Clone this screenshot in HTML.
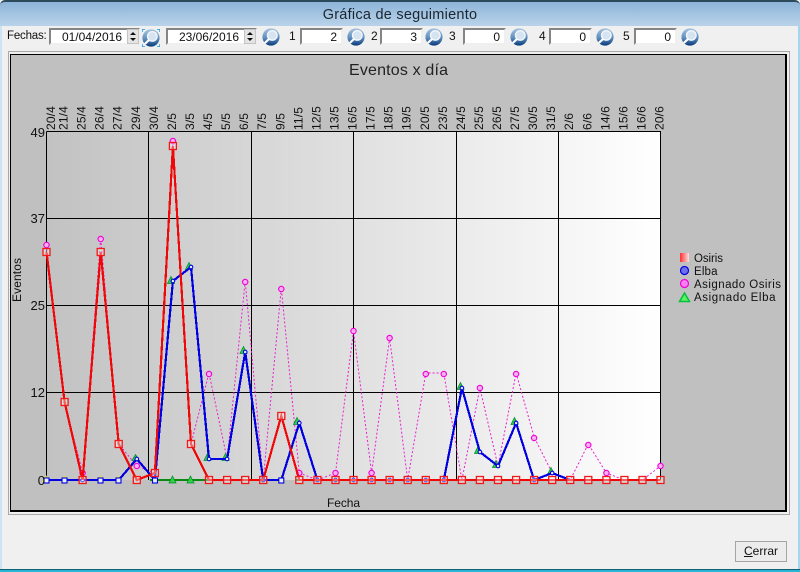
<!DOCTYPE html>
<html><head><meta charset="utf-8"><style>
html,body{margin:0;padding:0;background:#f0f0f0}
#w{position:relative;width:800px;height:572px;overflow:hidden;background:#f0f0f0;font:12px "Liberation Sans",sans-serif;color:#111}
#w div{position:absolute;box-sizing:border-box}
#tb{left:0;top:0;width:800px;height:26px;background:linear-gradient(#8db4d8,#b9d3ea);border-top:2px solid #2c4a5c;border-radius:5px 5px 0 0;text-align:center;font-size:14.5px;line-height:26px;color:#1c2630;letter-spacing:.25px}
.l{left:0;top:26px;width:2px;height:546px;background:#cde4f4}
.r{left:798px;top:26px;width:2px;height:546px;background:#9fd8ee}
.b{left:0;top:569px;width:800px;height:3px;background:#27b7d6;border-top:1px solid #0f5f74}
.t{line-height:16px;white-space:nowrap;top:28px}
.i{height:17px;top:28px;background:#fff;border:2px solid;border-color:#858585 #efefef #efefef #858585;text-align:right;line-height:14px;padding-right:4px;white-space:nowrap}
.s{width:12px;height:15px;top:29px;background:#e4e4e4;border:1px solid #c4c4c4}
.s:before,.s:after{content:"";position:absolute;left:2px;border-left:3px solid transparent;border-right:3px solid transparent}
.s:before{top:2px;border-bottom:3px solid #111}
.s:after{top:8px;border-top:3px solid #111}
svg.m{position:absolute;top:28px;width:18px;height:18px}
#pn{left:8px;top:51px;width:782px;height:464px;border:1px solid #a9a9a9}
#pi{left:10px;top:54px;width:777px;height:458px;background:#c0c0c0;border:1px solid #000;border-right-width:2px;border-bottom-width:2px}
#bt{left:735px;top:541px;width:52px;height:21px;background:#ececec;border:1px solid #a5a5a5;text-align:center;line-height:19px}
</style></head><body><div id="w">
<div id="tb">Gráfica de seguimiento</div>
<div class="l"></div><div class="r"></div>

<svg width="0" height="0" style="position:absolute"><defs>
<linearGradient id="g" x1="0" y1="0" x2="0" y2="1"><stop offset="0" stop-color="#a8c4de"/><stop offset=".55" stop-color="#5f8fbf"/><stop offset="1" stop-color="#08397a"/></linearGradient>
<symbol id="mg" viewBox="0 0 18 18"><circle cx="9" cy="9" r="8.6" fill="url(#g)"/><circle cx="10.3" cy="7.4" r="4.8" fill="#d6e4f1" stroke="#f5f8fb" stroke-width="1.3"/><path d="M7 11L2.8 15" stroke="#fff" stroke-width="2.2"/></symbol>
</defs></svg>

<div class="t" style="left:7px;font-size:11.5px;letter-spacing:-.2px">Fechas:</div>
<div class="i" style="left:49px;width:91px;padding-right:16px">01/04/2016</div><div class="s" style="left:127px"></div>
<svg class="m" style="left:142px;top:29px"><use href="#mg"/><path d="M0 3V0H3M15 0H18V3M0 15V18H3M15 18H18V15" fill="none" stroke="#1a9be0" stroke-width="1.4"/></svg>
<div class="i" style="left:166px;width:91px;padding-right:16px">23/06/2016</div><div class="s" style="left:244px"></div>
<svg class="m" style="left:262px"><use href="#mg"/></svg>
<div class="t" style="left:289px">1</div><div class="i" style="left:300px;width:43px">2</div><svg class="m" style="left:347px"><use href="#mg"/></svg>
<div class="t" style="left:371px">2</div><div class="i" style="left:380px;width:43px">3</div><svg class="m" style="left:425px"><use href="#mg"/></svg>
<div class="t" style="left:449px">3</div><div class="i" style="left:463px;width:43px">0</div><svg class="m" style="left:510px"><use href="#mg"/></svg>
<div class="t" style="left:539px">4</div><div class="i" style="left:549px;width:43px">0</div><svg class="m" style="left:596px"><use href="#mg"/></svg>
<div class="t" style="left:623px">5</div><div class="i" style="left:634px;width:43px">0</div><svg class="m" style="left:681px"><use href="#mg"/></svg>

<div id="pn"></div><div id="pi"></div>

<svg style="position:absolute;left:0;top:0" width="800" height="572" font-family="'Liberation Sans',sans-serif" fill="#111">
<defs>
<linearGradient id="pg"><stop offset="0" stop-color="#c2c2c2"/><stop offset="1" stop-color="#fff"/></linearGradient>
<linearGradient id="lg"><stop offset="0" stop-color="#ff3030"/><stop offset="1" stop-color="#ffe0e0"/></linearGradient>
<marker id="mr" markerUnits="userSpaceOnUse" markerWidth="10" markerHeight="10" refX="5" refY="5" overflow="visible"><rect x="1.5" y="1.5" width="7" height="7" fill="#fff" fill-opacity=".35" stroke="#f01818" stroke-width="1.3"/></marker>
<marker id="mb" markerUnits="userSpaceOnUse" markerWidth="8" markerHeight="8" refX="4" refY="4" overflow="visible"><circle cx="4" cy="4" r="1.8" fill="#dfe6ff" stroke="#0000e0" stroke-width="1.1"/></marker>
<marker id="mp" markerUnits="userSpaceOnUse" markerWidth="8" markerHeight="8" refX="4" refY="4" overflow="visible"><circle cx="4" cy="4" r="2.7" fill="#f8b0f0" stroke="#f000d8" stroke-width="1.1"/></marker>
</defs>

<rect x="46.5" y="131.5" width="614" height="348.5" fill="url(#pg)"/>
<g stroke="#000" stroke-width="1" shape-rendering="crispEdges">
<path d="M46.5 131.5H660.5V480M46.5 131.5V480M46.5 218.5H660.5M46.5 305.5H660.5M46.5 392.5H660.5M148.5 131.5V480M251.5 131.5V480M353.5 131.5V480M456.5 131.5V480M558.5 131.5V480" fill="none"/>
</g>

<polyline fill="none" stroke="#e820d0" stroke-width="1" stroke-dasharray="2 2" marker-start="url(#mp)" marker-end="url(#mp)" points="46.5,245 64.6,402 82.6,473 100.7,238 118.7,444 136.8,466 154.9,473 172.9,139 191,444 209,373 227.1,459 245.2,281 263.2,480 281.3,288 299.3,473 317.4,480 335.5,473 353.5,331 371.6,473 389.6,338 407.7,480 425.8,373 443.8,373 461.9,480 479.9,388 498,466 516.1,373 534.1,437 552.2,473 570.2,480 588.3,444 606.4,473 624.4,480 642.5,480 660.5,466"/>
<g fill="#f8b0f0" stroke="#f000d8" stroke-width="1.1"><circle cx="82.6" cy="473" r="2.7"/><circle cx="100.7" cy="239" r="2.7"/><circle cx="136.8" cy="466" r="2.7"/><circle cx="172.9" cy="141" r="2.7"/><circle cx="209" cy="374" r="2.7"/><circle cx="245.2" cy="282" r="2.7"/><circle cx="281.3" cy="289" r="2.7"/><circle cx="299.3" cy="473" r="2.7"/><circle cx="335.5" cy="473" r="2.7"/><circle cx="353.5" cy="331" r="2.7"/><circle cx="371.6" cy="473" r="2.7"/><circle cx="389.6" cy="338" r="2.7"/><circle cx="425.8" cy="374" r="2.7"/><circle cx="443.8" cy="374" r="2.7"/><circle cx="479.9" cy="388" r="2.7"/><circle cx="516.1" cy="374" r="2.7"/><circle cx="534.1" cy="438" r="2.7"/><circle cx="588.3" cy="445" r="2.7"/><circle cx="606.4" cy="473" r="2.7"/></g>

<path d="M150 480H210" stroke="#0a8a10" stroke-width="2" shape-rendering="crispEdges"/>
<path d="M296 480H317" stroke="#0a8a10" stroke-width="2" shape-rendering="crispEdges"/>
<g fill="#30d040" stroke="#009030" stroke-width=".8">
<path d="M172.5 476L176 483H169Z"/><path d="M190.5 476L194 483H187Z"/>
<g transform="translate(-1,-1.5)"><path d="M136.5 456L140 462H133Z"/><path d="M172 278L175.5 285H168.5Z"/><path d="M190 264L193.5 271H186.5Z"/><path d="M208.5 455L212 462H205Z"/><path d="M226.5 455L230 462H223Z"/><path d="M244.5 348L248 355H241Z"/><path d="M298 419L301.5 426H294.5Z"/><path d="M461.5 384L465 391H458Z"/><path d="M479 448L482.5 455H475.5Z"/><path d="M497 462L500.5 469H493.5Z"/><path d="M515.5 419L519 426H512Z"/><path d="M552 469L555.5 476H548.5Z"/></g>
</g>
<g fill="#e8e820"><path d="M46 475L50 482H42Z"/><path d="M64.5 475L68 482H61Z"/><path d="M100.5 475L104 482H97Z"/><path d="M118.5 475L122 482H115Z"/><path d="M281 475L285 482H277Z"/></g>

<polyline fill="none" stroke="#0000e0" stroke-width="2.2" shape-rendering="crispEdges" marker-start="url(#mb)" marker-mid="url(#mb)" points="46.5,480 64.6,480 82.6,480 100.7,480 118.7,480 136.8,459 154.9,480 172.9,281 191,267 209,459 227.1,459 245.2,352 263.2,480 281.3,480 299.3,423 317.4,480 335.5,480 353.5,480 371.6,480 389.6,480 407.7,480 425.8,480 443.8,480 461.9,388 479.9,452 498,466 516.1,423 534.1,480 552.2,473 570.2,480"/>
<g fill="#e8eeff" stroke="#0000e0" stroke-width="1.1"><rect x="44" y="478" width="5" height="5"/><rect x="62" y="478" width="5" height="5"/><rect x="98" y="478" width="5" height="5"/><rect x="116" y="478" width="5" height="5"/><rect x="152.5" y="478" width="5" height="5"/><rect x="278.8" y="478" width="5" height="5"/></g>

<polyline fill="none" stroke="#f00808" stroke-width="2.2" shape-rendering="crispEdges" marker-start="url(#mr)" marker-mid="url(#mr)" marker-end="url(#mr)" points="46.5,252 64.6,402 82.6,480 100.7,252 118.7,444 136.8,480 154.9,473 172.9,146 191,444 209,480 227.1,480 245.2,480 263.2,480 281.3,416 299.3,480 317.4,480 335.5,480 353.5,480 371.6,480 389.6,480 407.7,480 425.8,480 443.8,480 461.9,480 479.9,480 498,480 516.1,480 534.1,480 552.2,480 570.2,480 588.3,480 606.4,480 624.4,480 642.5,480 660.5,480"/>

<text x="398.5" y="75" text-anchor="middle" font-size="16" textLength="99" fill="#222">Eventos x día</text>
<g font-size="13" text-anchor="end"><text x="45" y="137">49</text><text x="45" y="223">37</text><text x="45" y="310">25</text><text x="45" y="397">12</text><text x="45" y="485">0</text></g>
<text x="327" y="507" font-size="12" textLength="33">Fecha</text>
<text transform="translate(21,302) rotate(-90)" font-size="12" textLength="44">Eventos</text>

<g font-size="12" letter-spacing=".15">
<text transform="translate(55,130) rotate(-90)">20/4</text>
<text transform="translate(67.5,130) rotate(-90)">21/4</text>
<text transform="translate(85.6,130) rotate(-90)">25/4</text>
<text transform="translate(103.7,130) rotate(-90)">26/4</text>
<text transform="translate(121.7,130) rotate(-90)">27/4</text>
<text transform="translate(139.8,130) rotate(-90)">29/4</text>
<text transform="translate(157.9,130) rotate(-90)">30/4</text>
<text transform="translate(175.9,130) rotate(-90)">2/5</text>
<text transform="translate(194,130) rotate(-90)">3/5</text>
<text transform="translate(212,130) rotate(-90)">4/5</text>
<text transform="translate(230.1,130) rotate(-90)">5/5</text>
<text transform="translate(248.2,130) rotate(-90)">6/5</text>
<text transform="translate(266.2,130) rotate(-90)">7/5</text>
<text transform="translate(284.3,130) rotate(-90)">9/5</text>
<text transform="translate(302.3,130) rotate(-90)">11/5</text>
<text transform="translate(320.4,130) rotate(-90)">12/5</text>
<text transform="translate(338.5,130) rotate(-90)">13/5</text>
<text transform="translate(356.5,130) rotate(-90)">16/5</text>
<text transform="translate(374.6,130) rotate(-90)">17/5</text>
<text transform="translate(392.6,130) rotate(-90)">18/5</text>
<text transform="translate(410.7,130) rotate(-90)">19/5</text>
<text transform="translate(428.8,130) rotate(-90)">20/5</text>
<text transform="translate(446.8,130) rotate(-90)">23/5</text>
<text transform="translate(464.9,130) rotate(-90)">24/5</text>
<text transform="translate(482.9,130) rotate(-90)">25/5</text>
<text transform="translate(501,130) rotate(-90)">26/5</text>
<text transform="translate(519.1,130) rotate(-90)">27/5</text>
<text transform="translate(537.1,130) rotate(-90)">30/5</text>
<text transform="translate(555.2,130) rotate(-90)">31/5</text>
<text transform="translate(573.2,130) rotate(-90)">2/6</text>
<text transform="translate(591.3,130) rotate(-90)">6/6</text>
<text transform="translate(609.4,130) rotate(-90)">14/6</text>
<text transform="translate(627.4,130) rotate(-90)">15/6</text>
<text transform="translate(645.5,130) rotate(-90)">16/6</text>
<text transform="translate(663.5,130) rotate(-90)">20/6</text>
</g>

<rect x="680" y="253" width="9" height="9" fill="url(#lg)"/>
<circle cx="684.5" cy="270.5" r="4" fill="#7070e8" stroke="#0000e0" stroke-width="1.2"/>
<circle cx="684.5" cy="283.5" r="4" fill="#f880f0" stroke="#f000d8" stroke-width="1.2"/>
<path d="M684.5 293L689.5 301.5H679.5Z" fill="#60f060" stroke="#00c040" stroke-width="1.5"/>
<g font-size="11.5"><text x="694" y="262" textLength="29">Osiris</text><text x="694" y="275" textLength="23.5">Elba</text><text x="694" y="288" textLength="87">Asignado  Osiris</text><text x="694" y="301" textLength="81.5">Asignado  Elba</text></g>
</svg>

<div id="bt"><u>C</u>errar</div>
<div class="b"></div>
</div></body></html>
